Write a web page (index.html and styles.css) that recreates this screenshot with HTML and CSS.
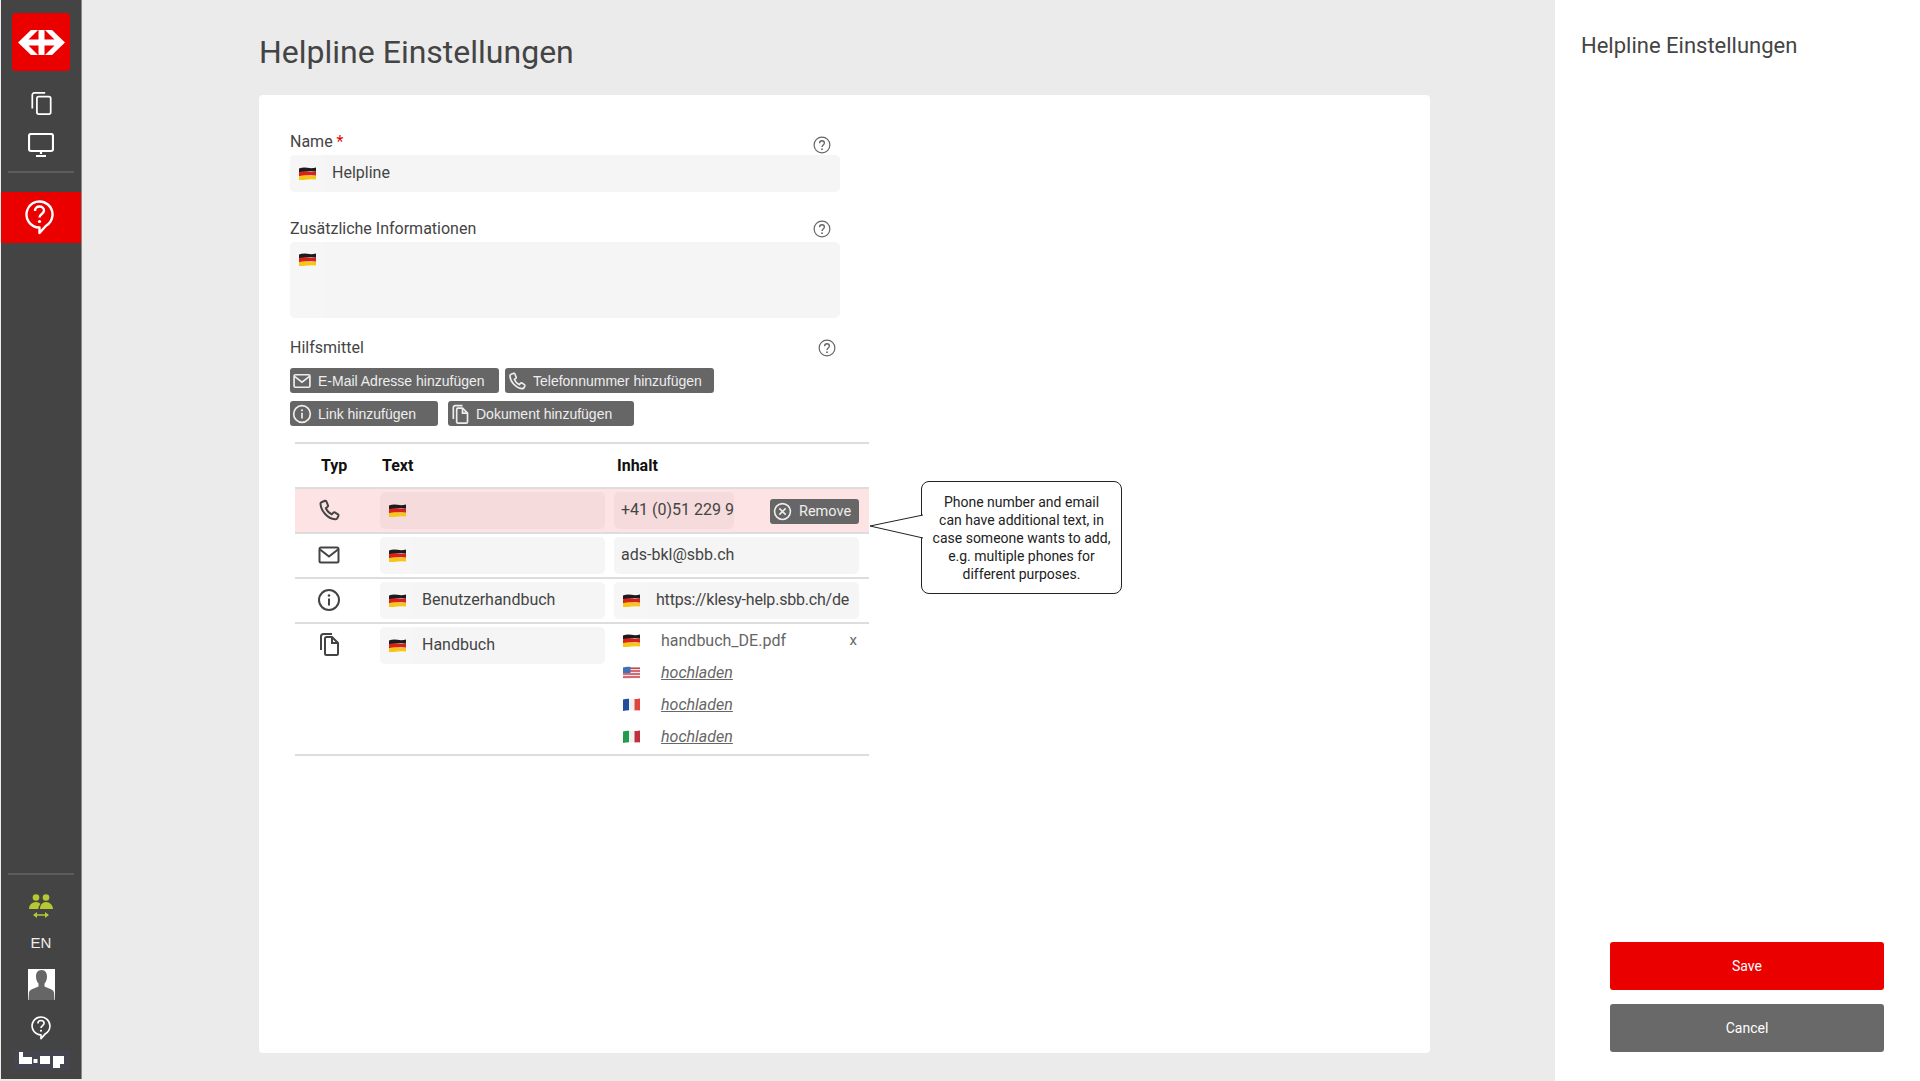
FILE: index.html
```html
<!DOCTYPE html>
<html lang="de">
<head>
  <meta charset="UTF-8">
  <title>Helpline Einstellungen</title>
  <link rel="stylesheet" href="styles.css">
</head>
<body>
  <!-- icon + flag sprites -->
  <svg class="sprites" xmlns="http://www.w3.org/2000/svg">
    <symbol id="i-mail" viewBox="0 0 24 24"><rect x="2.5" y="4.5" width="19" height="15" rx="1.5" fill="none" stroke="currentColor" stroke-width="2"/><path d="M3 6.500l9 7 9-7" fill="none" stroke="currentColor" stroke-width="2"/></symbol>
    <symbol id="i-phone" viewBox="0 0 24 24"><path d="M4.500 4.200L8 2.800c.8-.2 1.300.2 1.500.8L11 7.500c.2.500 0 1-.4 1.300l-1.800 1.400c1.200 2.800 3.200 4.800 6 6.200l1.600-1.800c.4-.4.9-.5 1.400-.2l3.200 2c.5.3.6.8.4 1.400l-1 2.200c-.4 1-1.400 1.300-2.400 1.200C10.500 20.500 4 13 3.500 6c-.1-.8.3-1.500 1-1.800z" fill="none" stroke="currentColor" stroke-width="2" stroke-linejoin="round"/></symbol>
    <symbol id="i-info" viewBox="0 0 24 24"><circle cx="12" cy="12" r="10" fill="none" stroke="currentColor" stroke-width="2"/><circle cx="12" cy="7.500" r="1.300" fill="currentColor"/><path d="M12 10.500v7" stroke="currentColor" stroke-width="2"/></symbol>
    <symbol id="i-doc" viewBox="0 0 24 24"><path d="M15 2H6.500C5 2 4 3 4 4.500V18" fill="none" stroke="currentColor" stroke-width="2"/><path d="M8 6.500C8 5.700 8.700 5 9.500 5H15l6 6v10.500c0 .8-.7 1.500-1.500 1.500h-10C8.700 23 8 22.300 8 21.500z" fill="none" stroke="currentColor" stroke-width="2"/><path d="M15 5v6h6" fill="none" stroke="currentColor" stroke-width="2"/></symbol>
    <symbol id="i-help" viewBox="0 0 24 24"><circle cx="12" cy="12" r="10.500" fill="none" stroke="currentColor" stroke-width="1.600"/><path d="M8.800 9.500c0-2 1.400-3.200 3.200-3.200s3.200 1.200 3.200 3c0 2.600-3.200 2.600-3.200 5.200" fill="none" stroke="currentColor" stroke-width="1.800"/><circle cx="12" cy="17.500" r="1.200" fill="currentColor"/></symbol>
    <symbol id="i-remove" viewBox="0 0 24 24"><circle cx="12" cy="12" r="10" fill="none" stroke="currentColor" stroke-width="2"/><path d="M8 8l8 8M16 8l-8 8" stroke="currentColor" stroke-width="2"/></symbol>
    <symbol id="i-bubble" viewBox="0 0 29 35"><path d="M14.500 27.500A13 13 0 1 1 21 25.760L14.500 33z" fill="none" stroke="currentColor" stroke-width="2.400" stroke-linejoin="round"/><path d="M10 11c0-3 2-4.500 4.500-4.500S19 8 19 10.500c0 3.500-4.500 3.500-4.500 7" fill="none" stroke="currentColor" stroke-width="2.400"/><circle cx="14.500" cy="21.500" r="1.600" fill="currentColor"/></symbol>
    <symbol id="flag-de" viewBox="0 0 17 13"><path d="M0 1.500Q4 0 8.500 .8T17 .5v4.200Q13 4 8.500 4.500T0 5.300z" fill="#1c1c1c"/><path d="M0 5.300Q4 4 8.500 4.500T17 4.700v4Q13 8 8.500 8.500T0 9.200z" fill="#d8201c"/><path d="M0 9.200Q4 8 8.500 8.500T17 8.700v3.800Q13 12 8.500 12.500T0 13z" fill="#f5c518"/></symbol>
    <symbol id="flag-us" viewBox="0 0 17 13"><path d="M0 1.500Q4 0 8.500 .8T17 .5v12Q13 12 8.500 12.500T0 13z" fill="#f1e4e6"/><path d="M7 2.200h10M7 5h10M0 8h17M0 11h17" stroke="#c8434f" stroke-width="1.400"/><path d="M0 1.500Q4 .5 7.500 .9V7H0z" fill="#3c72b8"/></symbol>
    <symbol id="flag-fr" viewBox="0 0 17 13"><path d="M0 1.500Q3 .5 6 .7V12.300Q3 12.300 0 13z" fill="#1f4f9e"/><path d="M6 .7Q8.500 .8 11.500 1V12.500Q8.500 12.500 6 12.300z" fill="#f1f1f1"/><path d="M11.500 1Q14 1 17 .5V12.500Q14 12 11.500 12.500z" fill="#e0443e"/></symbol>
    <symbol id="flag-it" viewBox="0 0 17 13"><path d="M0 1.500Q3 .5 6 .7V12.300Q3 12.300 0 13z" fill="#239b4f"/><path d="M6 .7Q8.500 .8 11.500 1V12.500Q8.500 12.500 6 12.300z" fill="#f1f1f1"/><path d="M11.500 1Q14 1 17 .5V12.500Q14 12 11.500 12.500z" fill="#bf2f3c"/></symbol>
  </svg>

  <nav class="sidebar">
    <div class="logo">
      <svg width="47" height="25" viewBox="0 0 47 25"><path fill="#fff" d="M13 0h7l-9.500 9.500h10V0h6v9.500h10L27 0h7l13 12.500L34 25h-7l9.500-9.500h-10V25h-6v-9.500h-10L20 25h-7L0 12.500z"/></svg>
    </div>
    <a class="side-icon side-copy">
      <svg width="21" height="23" viewBox="0 0 22 25" fill="none" stroke="#fff" stroke-width="1.900"><path d="M15 1H3C2 1 1 2 1 3v15"/><rect x="6" y="5" width="15" height="19" rx="2"/></svg>
    </a>
    <a class="side-icon side-screen">
      <svg width="26" height="24" viewBox="0 0 26 24" fill="none" stroke="#fff" stroke-width="2.200"><rect x="1" y="1" width="24" height="17" rx="2"/><path d="M13 18v3M8 23h10" /></svg>
    </a>
    <div class="side-line"></div>
    <a class="side-active">
      <svg class="bubble-large"><use href="#i-bubble"/></svg>
    </a>
    <div class="side-spacer"></div>
    <div class="side-line"></div>
    <a class="side-people">
      <svg width="24" height="25" viewBox="0 0 24 25" fill="#b5c931"><circle cx="7" cy="3.500" r="3.300"/><circle cx="17" cy="3.500" r="3.300"/><path d="M0 15c0-4 3-7 7-7 2 0 3.500.7 4.500 2C10 11.500 9.500 13 9.500 15zM11 15c0-4 2.500-7 6-7s7 3 7 7z"/><path d="M5 21h14" stroke="#b5c931" stroke-width="1.500"/><path d="M8 18v6l-4-3zM16 18v6l4-3z"/></svg>
    </a>
    <div class="side-lang">EN</div>
    <div class="avatar">
      <svg width="27" height="31" viewBox="0 0 27 31"><rect width="27" height="31" fill="#fff"/><path fill="#666" d="M13.500 1c4 0 5.500 3 5.500 6.500 0 3-1 5.500-2.500 7v3c2.500 1.500 9 2.500 9.500 6l.5 7.500H.5l.5-7.500c.5-3.500 7-4.500 9.500-6v-3C9 13 8 10.500 8 7.500 8 4 9.500 1 13.500 1z"/></svg>
    </div>
    <a class="side-help">
      <svg class="bubble-small"><use href="#i-bubble"/></svg>
    </a>
    <div class="bop">
      <svg width="57" height="20" viewBox="0 0 57 20" fill="#fff"><path d="M6 2h4v5h9v7H6zM20.500 9h4v4h-4zM27 6h10v8H27zM40 6h11v8h-4v4h-7z"/></svg>
    </div>
  </nav>

  <main class="content">
    <h1 class="page-title">Helpline Einstellungen</h1>
    <section class="card">
      <div class="form">
        <div class="field-head">
          <label class="field-label">Name <span class="req">*</span></label>
          <svg class="help-icon help-low"><use href="#i-help"/></svg>
        </div>
        <div class="lang-input">
          <span class="flag-cell"><svg class="flag"><use href="#flag-de"/></svg></span>
          <input type="text" value="Helpline">
        </div>

        <div class="field-head field-gap">
          <label class="field-label">Zusätzliche Informationen</label>
          <svg class="help-icon"><use href="#i-help"/></svg>
        </div>
        <div class="lang-input lang-area">
          <span class="flag-cell"><svg class="flag"><use href="#flag-de"/></svg></span>
        </div>

        <div class="field-head tools-head">
          <label class="field-label">Hilfsmittel</label>
          <svg class="help-icon"><use href="#i-help"/></svg>
        </div>
        <div class="tool-row">
          <button class="tool-btn btn-mail"><svg class="btn-icon"><use href="#i-mail"/></svg>E-Mail Adresse hinzufügen</button>
          <button class="tool-btn btn-mail"><svg class="btn-icon"><use href="#i-phone"/></svg>Telefonnummer hinzufügen</button>
        </div>
        <div class="tool-row">
          <button class="tool-btn btn-link"><svg class="btn-icon"><use href="#i-info"/></svg>Link hinzufügen</button>
          <button class="tool-btn btn-doc"><svg class="btn-icon"><use href="#i-doc"/></svg>Dokument hinzufügen</button>
        </div>

        <div class="res-table">
          <div class="res-row res-head">
            <div class="head-typ">Typ</div>
            <div class="head-text">Text</div>
            <div class="head-text head-content">Inhalt</div>
          </div>

          <div class="res-row res-active">
            <div class="typ-cell"><svg class="typ-icon"><use href="#i-phone"/></svg></div>
            <div class="lang-input">
              <span class="flag-cell"><svg class="flag"><use href="#flag-de"/></svg></span>
              <input type="text">
            </div>
            <div class="content-cell">
              <div class="lang-input phone-input"><input class="plain-input" type="text" value="+41 (0)51 229 9"></div>
              <button class="remove-btn"><svg class="remove-icon"><use href="#i-remove"/></svg>Remove</button>
            </div>
          </div>

          <div class="res-row">
            <div class="typ-cell"><svg class="typ-icon"><use href="#i-mail"/></svg></div>
            <div class="lang-input">
              <span class="flag-cell"><svg class="flag"><use href="#flag-de"/></svg></span>
              <input type="text">
            </div>
            <div class="lang-input"><input class="plain-input" type="text" value="ads-bkl@sbb.ch"></div>
          </div>

          <div class="res-row">
            <div class="typ-cell"><svg class="typ-icon"><use href="#i-info"/></svg></div>
            <div class="lang-input">
              <span class="flag-cell"><svg class="flag"><use href="#flag-de"/></svg></span>
              <input type="text" value="Benutzerhandbuch">
            </div>
            <div class="lang-input">
              <span class="flag-cell"><svg class="flag"><use href="#flag-de"/></svg></span>
              <input class="url-input" type="text" value="https://klesy-help.sbb.ch/de">
            </div>
          </div>

          <div class="res-row res-last">
            <div class="typ-cell"><svg class="typ-icon"><use href="#i-doc"/></svg></div>
            <div class="lang-input">
              <span class="flag-cell"><svg class="flag"><use href="#flag-de"/></svg></span>
              <input type="text" value="Handbuch">
            </div>
            <div class="doc-list">
              <div class="doc-row"><svg class="flag"><use href="#flag-de"/></svg><span class="doc-name">handbuch_DE.pdf</span><span class="doc-x">x</span></div>
              <div class="doc-row"><svg class="flag"><use href="#flag-us"/></svg><a class="doc-upload">hochladen</a></div>
              <div class="doc-row"><svg class="flag"><use href="#flag-fr"/></svg><a class="doc-upload">hochladen</a></div>
              <div class="doc-row"><svg class="flag"><use href="#flag-it"/></svg><a class="doc-upload">hochladen</a></div>
            </div>
          </div>
        </div>
      </div>

      <!-- annotation -->
      <div class="callout">
        <svg class="callout-tail" width="56" height="26" viewBox="0 0 56 26"><path d="M54 1L1 12l53 12" fill="#fff" stroke="#222" stroke-width="1"/></svg>
        Phone number and email can have additional text, in case someone wants to add, e.g. multiple phones for different purposes.
      </div>
    </section>
  </main>

  <aside class="panel">
    <h2 class="panel-title">Helpline Einstellungen</h2>
    <div class="panel-actions">
      <button class="action-btn save-btn">Save</button>
      <button class="action-btn cancel-btn">Cancel</button>
    </div>
  </aside>
</body>
</html>
```

FILE: styles.css
```css
html, body {
  height: 100%;
  margin: 0;
}
body {
  display: flex;
  overflow: hidden;
  background-color: #ebebeb;
  color: #444;
  font-family: Roboto, "Liberation Sans", sans-serif;
  font-size: 16px;
}
.sprites {
  display: none;
}

/* left nav */
.sidebar {
  width: 80px;
  height: 1079px;
  margin-left: 1px;
  flex: none;
  display: flex;
  flex-direction: column;
  align-items: center;
  background-color: #444;
  border-right: 1px solid #888;
}
.logo {
  width: 58px;
  height: 58px;
  margin-top: 13px;
  display: flex;
  align-items: center;
  justify-content: center;
  background-color: #eb0000;
  border-radius: 4px;
}
.side-icon {
  display: flex;
}
.side-copy {
  margin-top: 21px;
}
.side-screen {
  margin-top: 18px;
}
.side-line {
  width: 66px;
  height: 2px;
  flex: none;
  background-color: #5c5c5c;
}
.side-screen + .side-line {
  margin-top: 14px;
}
.side-active {
  width: 100%;
  height: 51px;
  margin-top: 19px;
  padding-right: 3px;
  box-sizing: border-box;
  display: flex;
  align-items: center;
  justify-content: center;
  background-color: #eb0000;
  color: #fff;
}
.bubble-large {
  width: 29px;
  height: 35px;
}
.bubble-small {
  width: 20px;
  height: 24px;
  color: #fff;
}
.side-spacer {
  flex: 1;
}
.side-people {
  margin-top: 19px;
  display: flex;
}
.side-lang {
  margin-top: 15px;
  color: #eee;
  font-family: "Liberation Sans", sans-serif;
  font-size: 15px;
  line-height: 17px;
}
.avatar {
  margin-top: 18px;
  display: flex;
}
.side-help {
  margin-top: 16px;
  display: flex;
}
.bop {
  width: 57px;
  height: 20px;
  margin-top: 10px;
  margin-bottom: 9px;
  background-color: #45454f;
  display: flex;
}

/* middle */
.content {
  flex: 1;
  padding-left: 177px;
  padding-right: 125px;
}
.page-title {
  margin: 0;
  height: 95px;
  font-size: 32px;
  font-weight: 400;
  line-height: 104px;
  color: #444;
}
.card {
  position: relative;
  width: 1171px;
  height: 958px;
  padding: 37px 0 0 31px;
  box-sizing: border-box;
  background-color: #fff;
  border-radius: 4px;
}
.form {
  width: 550px;
}
.field-head {
  height: 23px;
  display: flex;
  justify-content: space-between;
  align-items: flex-start;
  padding-right: 9px;
}
.field-gap {
  margin-top: 27px;
  height: 23px;
}
.tools-head {
  margin-top: 20px;
  height: 30px;
  padding-right: 4px;
}
.field-label {
  line-height: 20px;
}
.req {
  color: #eb0000;
}
.help-icon {
  width: 18px;
  height: 18px;
  margin-top: 1px;
  color: #666;
}
.help-low {
  margin-top: 4px;
}
.lang-input {
  height: 37px;
  display: flex;
  background-color: #f5f5f5;
  border-radius: 5px;
  overflow: hidden;
}
.lang-input input {
  flex: 1;
  min-width: 0;
  padding: 0 0 2px 9px;
  border: none;
  outline: none;
  background: none;
  color: #444;
  font-family: inherit;
  font-size: 16px;
}
.lang-input .plain-input {
  padding-left: 7px;
}
.url-input {
  letter-spacing: -0.2px;
}
.lang-area {
  height: 76px;
}
.flag-cell {
  width: 33px;
  padding-left: 2px;
  box-sizing: border-box;
  flex: none;
  display: flex;
  align-items: center;
  justify-content: center;
  background-color: #f6f6f6;
}
.lang-area .flag-cell {
  align-items: flex-start;
  padding-top: 11px;
}
.flag {
  width: 17px;
  height: 13px;
  flex: none;
}

/* add buttons */
.tool-row {
  display: flex;
  gap: 6px;
  margin-bottom: 8px;
}
.tool-btn {
  height: 25px;
  padding: 0 0 0 2px;
  display: flex;
  align-items: center;
  gap: 6px;
  border: none;
  border-radius: 3px;
  background-color: #666;
  color: #eee;
  font-family: "Liberation Sans", sans-serif;
  font-size: 14px;
}
.btn-mail {
  width: 209px;
}
.btn-link {
  width: 148px;
  margin-right: 4px;
}
.btn-doc {
  width: 186px;
}
.btn-icon {
  width: 20px;
  height: 20px;
  flex: none;
}

/* resources table */
.res-table {
  width: 574px;
  margin-top: 16px;
  margin-left: 5px;
  border-bottom: 2px solid #ddd;
}
.res-row {
  display: grid;
  grid-template-columns: 76px 225px 245px;
  column-gap: 9px;
  padding: 3px 0;
  height: 37px;
  border-top: 2px solid #ddd;
}
.res-head {
  font-weight: 700;
  color: #111;
  line-height: 37px;
}
.head-typ {
  padding-left: 26px;
}
.head-text {
  padding-left: 2px;
}
.head-content {
  padding-left: 3px;
}
.res-active {
  background-color: #fde3e3;
}
.res-active .lang-input {
  background-color: rgba(0, 0, 0, 0.03);
}
.res-active .flag-cell {
  background-color: transparent;
}
.res-last {
  height: auto;
  padding-bottom: 2px;
}
.typ-cell {
  height: 35px;
  padding-left: 22px;
  display: flex;
  align-items: center;
}
.res-last .typ-cell {
  height: 33px;
}
.typ-icon {
  width: 24px;
  height: 24px;
  color: #444;
}
.content-cell {
  display: flex;
  justify-content: space-between;
  align-items: flex-start;
}
.phone-input {
  width: 120px;
}
.remove-btn {
  width: 89px;
  height: 25px;
  margin-top: 7px;
  padding: 0 0 0 3px;
  display: flex;
  align-items: center;
  gap: 7px;
  border: none;
  border-radius: 3px;
  background-color: #666;
  color: #eee;
  font-family: inherit;
  font-size: 14.5px;
}
.remove-icon {
  width: 19px;
  height: 19px;
  flex: none;
}
.doc-list {
  margin-top: -3px;
}
.doc-row {
  height: 32px;
  padding-left: 9px;
  display: flex;
  align-items: center;
  color: #666;
}
.doc-name, .doc-upload {
  margin-left: 21px;
}
.doc-upload {
  font-style: italic;
  text-decoration: underline;
}
.doc-x {
  margin-left: auto;
  margin-right: 2px;
  font-size: 15px;
}

/* annotation bubble */
.callout {
  position: absolute;
  left: 662px;
  top: 386px;
  width: 201px;
  height: 113px;
  padding: 11px 9px 0;
  box-sizing: border-box;
  background-color: #fff;
  border: 1px solid #222;
  border-radius: 8px;
  color: #222;
  font-size: 14px;
  line-height: 18px;
  text-align: center;
}
.callout-tail {
  position: absolute;
  left: -53px;
  top: 32px;
}

/* right side */
.panel {
  width: 365px;
  flex: none;
  padding: 0 36px 29px 26px;
  box-sizing: border-box;
  display: flex;
  flex-direction: column;
  background-color: #fff;
}
.panel-title {
  margin: 0;
  font-size: 22px;
  font-weight: 400;
  line-height: 92px;
  color: #444;
}
.panel-actions {
  margin-top: auto;
  margin-left: 29px;
  display: flex;
  flex-direction: column;
  gap: 14px;
}
.action-btn {
  height: 48px;
  border: none;
  border-radius: 3px;
  color: #fff;
  font-family: inherit;
  font-size: 14px;
}
.save-btn {
  background-color: #eb0000;
}
.cancel-btn {
  background-color: #696969;
}
```
